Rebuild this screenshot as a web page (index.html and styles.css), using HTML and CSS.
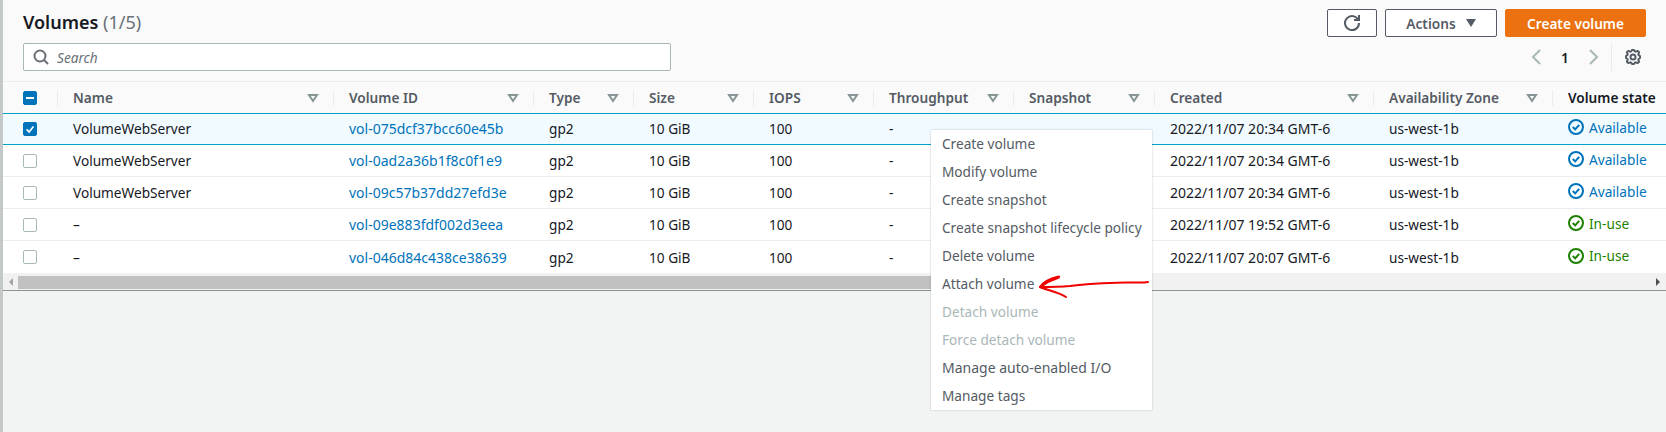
FILE: index.html
```html
<!DOCTYPE html>
<html>

<head>
    <meta charset="utf-8">
    <title>Volumes</title>
    <link rel="stylesheet" href="styles.css">
</head>

<body>
    <svg class="sprites" width="0" height="0">
        <symbol id="i-ok" viewBox="0 0 16 16">
            <circle cx="8" cy="8" r="7" />
            <path d="M4.8 8l2.4 2.4 4-4.6" />
        </symbol>
        <symbol id="i-sort" viewBox="0 0 16 16">
            <path d="M4 5h8l-4 6z" />
        </symbol>
    </svg>

    <div class="panel">
        <div class="toolbar">
            <div class="toolbar-left">
                <h1 class="title">Volumes <span class="count">(1/5)</span></h1>
                <div class="search">
                    <svg class="search-icon" viewBox="0 0 16 16">
                        <circle cx="7" cy="7" r="5.5" />
                        <path d="M11 11l4 4" />
                    </svg>
                    <span class="search-text">Search</span>
                </div>
            </div>
            <div class="toolbar-right">
                <div class="buttons">
                    <button class="btn btn-refresh">
                        <svg class="btn-icon" viewBox="0 0 16 16">
                            <path d="M10 5h5V0" />
                            <path d="M15 8a7 7 0 1 1-.7-3" />
                        </svg>
                    </button>
                    <button class="btn btn-actions">Actions <span class="caret"></span></button>
                    <button class="btn btn-primary">Create volume</button>
                </div>
                <div class="pager">
                    <svg class="chev" viewBox="0 0 16 16"><path d="M11 1L4 8l7 7" /></svg>
                    <span class="page-num">1</span>
                    <svg class="chev" viewBox="0 0 16 16"><path d="M5 1l7 7-7 7" /></svg>
                    <span class="pager-sep"></span>
                    <svg class="gear" viewBox="0 0 16 16">
                        <path d="M13.300 5.200l.8-1.900-1.400-1.400-1.900.8c-.3-.2-.7-.3-1-.4L9 1H7l-.8 1.300c-.3.100-.7.200-1 .4l-1.900-.8-1.400 1.400.8 1.900c-.2.3-.3.7-.4 1L1 7v2l1.300.8c.1.4.3.7.4 1l-.8 1.900 1.400 1.400 1.900-.8c.3.2.7.3 1 .4L7 15h2l.8-1.300c.4-.1.7-.3 1-.4l1.900.8 1.400-1.400-.8-1.900c.2-.3.3-.7.4-1L15 9V7l-1.300-.8c-.1-.3-.2-.7-.4-1z" />
                        <circle cx="8" cy="8" r="2.500" />
                    </svg>
                </div>
            </div>
        </div>

        <table class="grid">
            <colgroup>
                <col class="c-check">
                <col class="c-name">
                <col class="c-id">
                <col class="c-type">
                <col class="c-size">
                <col class="c-iops">
                <col class="c-thru">
                <col class="c-snap">
                <col class="c-created">
                <col class="c-zone">
                <col class="c-state">
            </colgroup>
            <thead>
                <tr>
                    <th class="cell-check"><span class="check check-on"><span class="dash"></span></span></th>
                    <th><div class="th-in">Name <svg class="sort"><use href="#i-sort" /></svg></div></th>
                    <th><div class="th-in">Volume ID <svg class="sort"><use href="#i-sort" /></svg></div></th>
                    <th><div class="th-in">Type <svg class="sort"><use href="#i-sort" /></svg></div></th>
                    <th><div class="th-in">Size <svg class="sort"><use href="#i-sort" /></svg></div></th>
                    <th><div class="th-in">IOPS <svg class="sort"><use href="#i-sort" /></svg></div></th>
                    <th><div class="th-in">Throughput <svg class="sort"><use href="#i-sort" /></svg></div></th>
                    <th><div class="th-in">Snapshot <svg class="sort"><use href="#i-sort" /></svg></div></th>
                    <th><div class="th-in">Created <svg class="sort"><use href="#i-sort" /></svg></div></th>
                    <th><div class="th-in">Availability Zone <svg class="sort"><use href="#i-sort" /></svg></div></th>
                    <th><div class="th-in th-active">Volume state</div></th>
                </tr>
            </thead>
            <tbody>
                <tr class="selected">
                    <td class="cell-check"><span class="check check-on">
                        <svg class="tick" viewBox="0 0 14 14"><path d="M3 7.500l3 3 5-6.500" /></svg>
                    </span></td>
                    <td>VolumeWebServer</td>
                    <td><a class="link">vol-075dcf37bcc60e45b</a></td>
                    <td>gp2</td>
                    <td>10 GiB</td>
                    <td>100</td>
                    <td>-</td>
                    <td></td>
                    <td class="date">2022/11/07 20:34 GMT-6</td>
                    <td>us-west-1b</td>
                    <td><span class="state state-available"><svg class="state-icon"><use href="#i-ok" /></svg>Available</span></td>
                </tr>
                <tr>
                    <td class="cell-check"><span class="check"></span></td>
                    <td>VolumeWebServer</td>
                    <td><a class="link">vol-0ad2a36b1f8c0f1e9</a></td>
                    <td>gp2</td>
                    <td>10 GiB</td>
                    <td>100</td>
                    <td>-</td>
                    <td></td>
                    <td class="date">2022/11/07 20:34 GMT-6</td>
                    <td>us-west-1b</td>
                    <td><span class="state state-available"><svg class="state-icon"><use href="#i-ok" /></svg>Available</span></td>
                </tr>
                <tr>
                    <td class="cell-check"><span class="check"></span></td>
                    <td>VolumeWebServer</td>
                    <td><a class="link">vol-09c57b37dd27efd3e</a></td>
                    <td>gp2</td>
                    <td>10 GiB</td>
                    <td>100</td>
                    <td>-</td>
                    <td></td>
                    <td class="date">2022/11/07 20:34 GMT-6</td>
                    <td>us-west-1b</td>
                    <td><span class="state state-available"><svg class="state-icon"><use href="#i-ok" /></svg>Available</span></td>
                </tr>
                <tr>
                    <td class="cell-check"><span class="check"></span></td>
                    <td>–</td>
                    <td><a class="link">vol-09e883fdf002d3eea</a></td>
                    <td>gp2</td>
                    <td>10 GiB</td>
                    <td>100</td>
                    <td>-</td>
                    <td></td>
                    <td class="date">2022/11/07 19:52 GMT-6</td>
                    <td>us-west-1b</td>
                    <td><span class="state state-inuse"><svg class="state-icon"><use href="#i-ok" /></svg>In-use</span></td>
                </tr>
                <tr class="last">
                    <td class="cell-check"><span class="check"></span></td>
                    <td>–</td>
                    <td><a class="link">vol-046d84c438ce38639</a></td>
                    <td>gp2</td>
                    <td>10 GiB</td>
                    <td>100</td>
                    <td>-</td>
                    <td></td>
                    <td class="date">2022/11/07 20:07 GMT-6</td>
                    <td>us-west-1b</td>
                    <td><span class="state state-inuse"><svg class="state-icon"><use href="#i-ok" /></svg>In-use</span></td>
                </tr>
            </tbody>
        </table>

        <div class="scrollbar">
            <span class="arrow arrow-left"></span>
            <span class="thumb"></span>
            <span class="arrow arrow-right"></span>
        </div>
    </div>

    <ul class="menu">
        <li>Create volume</li>
        <li>Modify volume</li>
        <li>Create snapshot</li>
        <li>Create snapshot lifecycle policy</li>
        <li>Delete volume</li>
        <li>Attach volume</li>
        <li class="disabled">Detach volume</li>
        <li class="disabled">Force detach volume</li>
        <li class="wide">Manage auto-enabled I/O</li>
        <li>Manage tags</li>
    </ul>

    <!-- red marker arrow drawn on top of the screenshot -->
    <svg class="scribble" viewBox="0 0 125 40">
        <path d="M120 7C116 8 108 7.500 98 7.500C84 8 62 8 42 11C30 12 20 12 12 12" />
        <path d="M12 12C16 6 24 3 31 1.500C32 3 26 4 20 7C17 9 15 10.500 12 12C18 15 28 16 38 22" />
    </svg>
</body>

</html>
```

FILE: styles.css
```css
* {
    box-sizing: border-box;
}

html,
body {
    height: 100%;
}

body {
    margin: 0;
    overflow: hidden;
    position: relative;
    background-color: #f2f3f3;
    border-left: 3px solid #c4c8c8;
    font-family: "Noto Sans", Arial, sans-serif;
    font-size: 13.65px;
    color: #16191f;
}

.sprites {
    position: absolute;
}

.panel {
    background-color: #ffffff;
    border-bottom: 1px solid #879596;
    height: 291px;
}

/* toolbar */

.toolbar {
    display: flex;
    justify-content: space-between;
    height: 81px;
    padding: 9px 20px 10px 20px;
    background-color: #fafafa;
}

.title {
    margin: 0 0 8px 0;
    height: 26px;
    line-height: 26px;
    font-size: 18px;
    font-weight: 600;
}

.count {
    font-weight: 400;
    color: #687078;
}

.search {
    display: flex;
    align-items: center;
    width: 648px;
    height: 28px;
    padding-left: 9px;
    background-color: #ffffff;
    border: 1px solid #aab7b8;
    border-radius: 2px;
}

.search-icon {
    width: 16px;
    height: 16px;
    fill: none;
    stroke: #687078;
    stroke-width: 2;
}

.search-text {
    margin-left: 8px;
    font-style: italic;
    color: #687078;
}

.buttons {
    display: flex;
    gap: 8px;
    height: 28px;
    margin-bottom: 6px;
}

.btn {
    display: flex;
    align-items: center;
    justify-content: center;
    height: 28px;
    padding: 0;
    font-family: inherit;
    font-size: 13.65px;
    font-weight: 600;
    color: #545b64;
    background-color: #ffffff;
    border: 1px solid #545b64;
    border-radius: 2px;
}

.btn-refresh {
    width: 50px;
}

.btn-icon {
    width: 16px;
    height: 16px;
    fill: none;
    stroke: #545b64;
    stroke-width: 2;
}

.btn-actions {
    width: 112px;
    gap: 10px;
}

.caret {
    width: 0;
    height: 0;
    border-left: 5px solid transparent;
    border-right: 5px solid transparent;
    border-top: 8px solid #545b64;
}

.btn-primary {
    width: 141px;
    color: #ffffff;
    background-color: #ec7211;
    border-color: #ec7211;
}

.pager {
    display: flex;
    align-items: center;
    justify-content: flex-end;
    height: 28px;
    padding-right: 5px;
}

.chev {
    width: 16px;
    height: 16px;
    fill: none;
    stroke: #aab7b8;
    stroke-width: 2;
}

.page-num {
    width: 40px;
    text-align: center;
    font-weight: 600;
}

.pager-sep {
    width: 1px;
    height: 28px;
    margin: 0 13px 0 10px;
    background-color: #eaeded;
}

.gear {
    width: 16px;
    height: 16px;
    fill: none;
    stroke: #545b64;
    stroke-width: 2;
    stroke-linejoin: round;
}

/* table */

.grid {
    width: 100%;
    table-layout: fixed;
    border-collapse: separate;
    border-spacing: 0;
}

.c-check { width: 54px; }
.c-name { width: 276px; }
.c-id { width: 200px; }
.c-type { width: 100px; }
.c-size { width: 120px; }
.c-iops { width: 120px; }
.c-thru { width: 140px; }
.c-snap { width: 141px; }
.c-created { width: 219px; }
.c-zone { width: 179px; }
.c-state { width: 114px; }

.grid th {
    height: 33px;
    padding: 0;
    text-align: left;
    font-weight: 600;
    color: #545b64;
    background-color: #fafafa;
    border-top: 1px solid #eaeded;
    border-bottom: 1px solid #00a1c9;
}

.th-in {
    display: flex;
    align-items: center;
    justify-content: space-between;
    height: 16px;
    padding: 0 12px 0 15px;
    border-left: 1px solid #eaeded;
    white-space: nowrap;
}

.th-active {
    color: #16191f;
}

.sort {
    width: 16px;
    height: 16px;
    fill: none;
    stroke: #879596;
    stroke-width: 2;
}

.grid td {
    height: 32px;
    padding: 0 0 0 16px;
    border-bottom: 1px solid #eaeded;
    white-space: nowrap;
}

.grid .cell-check {
    padding: 0 0 0 20px;
    line-height: 0;
}

.grid .selected td {
    height: 31px;
    padding-bottom: 1px;
    background-color: #f1faff;
    border-bottom-color: #00a1c9;
}

.grid .last td {
    border-bottom: 0;
}

.grid .date {
    font-size: 14px;
}

.check {
    display: inline-block;
    width: 14px;
    height: 14px;
    vertical-align: middle;
    background-color: #ffffff;
    border: 1px solid #aab7b8;
    border-radius: 2px;
}

.check-on {
    position: relative;
    background-color: #0073bb;
    border-color: #0073bb;
}

.dash {
    display: block;
    width: 8px;
    height: 2px;
    margin: 5px 2px;
    background-color: #ffffff;
}

.tick {
    display: block;
    width: 12px;
    height: 12px;
    fill: none;
    stroke: #ffffff;
    stroke-width: 2;
}

.link {
    font-size: 14px;
    color: #0073bb;
}

.state {
    display: inline-flex;
    align-items: center;
    gap: 5px;
}

.state-icon {
    width: 16px;
    height: 16px;
    fill: none;
    stroke-width: 2;
    stroke: currentColor;
}

.state-available {
    color: #0073bb;
}

.state-inuse {
    color: #1d8102;
}

/* fake horizontal scrollbar */

.scrollbar {
    display: flex;
    align-items: center;
    height: 17px;
    padding-top: 1px;
    background-color: #f1f1f1;
}

.arrow {
    width: 0;
    height: 0;
    border-top: 4px solid transparent;
    border-bottom: 4px solid transparent;
}

.arrow-left {
    margin: 0 5px 0 6px;
    border-right: 4px solid #a3a3a3;
}

.arrow-right {
    margin: 0 6px 0 auto;
    border-left: 4px solid #505050;
}

.thumb {
    width: 980px;
    height: 13px;
    background-color: #c1c1c1;
}

/* context menu */

.menu {
    position: absolute;
    left: 928px;
    top: 130px;
    width: 221px;
    margin: 0;
    padding: 0;
    list-style: none;
    color: #545b64;
    background-color: #ffffff;
    box-shadow: 0 0 2px rgba(0, 28, 36, 0.25);
}

.menu li {
    height: 28px;
    line-height: 28px;
    padding-left: 11px;
    white-space: nowrap;
}

.menu .disabled {
    color: #aab7b8;
}

.menu .wide {
    font-size: 14px;
}

.scribble {
    position: absolute;
    left: 1025px;
    top: 275px;
    width: 125px;
    height: 40px;
    fill: none;
    stroke: #f00000;
    stroke-width: 2;
    stroke-linecap: round;
    stroke-linejoin: round;
}
```
